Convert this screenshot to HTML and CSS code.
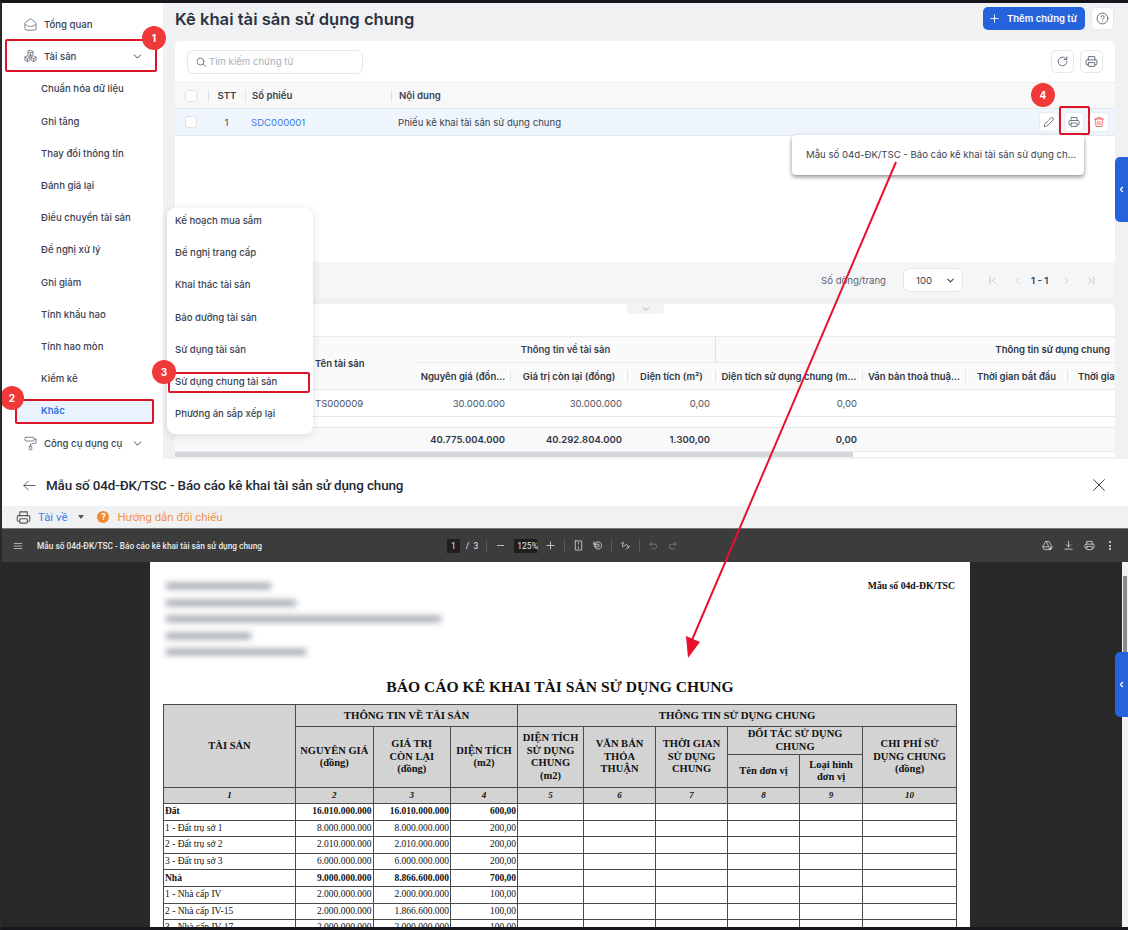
FILE: index.html
```html
<!DOCTYPE html>
<html lang="vi">
<head>
    <meta charset="UTF-8">
    <title>Kê khai tài sản sử dụng chung</title>
    <link rel="stylesheet" href="styles.css">
</head>
<body>
<svg class="sprite" width="0" height="0">
    <defs>
        <symbol id="i-printer" viewBox="0 0 24 24"><path d="M6 9V3h12v6"/><path d="M6 18H4a2 2 0 0 1-2-2v-5a2 2 0 0 1 2-2h16a2 2 0 0 1 2 2v5a2 2 0 0 1-2 2h-2"/><rect x="6" y="14" width="12" height="7" rx="1"/></symbol>
        <symbol id="i-refresh" viewBox="0 0 24 24"><path d="M20 12a8 8 0 1 1-2.6-5.9L20 8.5"/><path d="M20 3.5v5h-5"/></symbol>
        <symbol id="i-search" viewBox="0 0 24 24"><circle cx="11" cy="11" r="7"/><path d="M21 21l-4.8-4.8"/></symbol>
        <symbol id="i-pencil" viewBox="0 0 24 24"><path d="M16.5 3.5a2.9 2.9 0 0 1 4 4L7.5 20.5 2.5 21.5l1-5z"/></symbol>
        <symbol id="i-trash" viewBox="0 0 24 24"><path d="M3 6h18"/><path d="M19 6l-1 15H6L5 6"/><path d="M8 6V4a1 1 0 0 1 1-1h6a1 1 0 0 1 1 1v2"/><path d="M10 11v6"/><path d="M14 11v6"/></symbol>
        <symbol id="i-help" viewBox="0 0 24 24"><circle cx="12" cy="12" r="10"/><path d="M9 9.3a3 3 0 0 1 6 .7c0 2-3 2.5-3 4"/><path d="M12 17.5h.01"/></symbol>
        <symbol id="i-home" viewBox="0 0 24 24"><path d="M3 10.5a2 2 0 0 1 .8-1.6l7-5.4a2 2 0 0 1 2.4 0l7 5.4a2 2 0 0 1 .8 1.6V19a2 2 0 0 1-2 2H5a2 2 0 0 1-2-2z"/><path d="M3.5 11.5c5 5 12 5 17 0"/></symbol>
        <symbol id="i-boxes" viewBox="0 0 24 24"><path d="M12 2l4 2.2v4.600L12 11 8 8.800V4.200z"/><path d="M7 11l4 2.200v4.600L7 20l-4-2.200v-4.600z"/><path d="M17 11l4 2.200v4.600L17 20l-4-2.200v-4.600z"/><path d="M8 4.200l4 2.300 4-2.300M12 6.500V11M3 13.200l4 2.300 4-2.300M7 15.500V20M13 13.200l4 2.300 4-2.300M17 15.500V20"/></symbol>
        <symbol id="i-roller" viewBox="0 0 24 24"><rect x="3" y="2" width="15" height="6" rx="2"/><path d="M18 5h3v6l-9 2v3"/><rect x="10" y="16" width="4" height="6" rx="1"/></symbol>
        <symbol id="i-down" viewBox="0 0 24 24"><path d="M6 9l6 6 6-6"/></symbol>
        <symbol id="i-left" viewBox="0 0 24 24"><path d="M15 6l-6 6 6 6"/></symbol>
        <symbol id="i-right" viewBox="0 0 24 24"><path d="M9 6l6 6-6 6"/></symbol>
        <symbol id="i-first" viewBox="0 0 24 24"><path d="M18 6l-6 6 6 6"/><path d="M7 5v14"/></symbol>
        <symbol id="i-last" viewBox="0 0 24 24"><path d="M6 6l6 6-6 6"/><path d="M17 5v14"/></symbol>
        <symbol id="i-plus" viewBox="0 0 24 24"><path d="M12 4v16M4 12h16"/></symbol>
        <symbol id="i-minus" viewBox="0 0 24 24"><path d="M5 12h14"/></symbol>
        <symbol id="i-back" viewBox="0 0 24 24"><path d="M21 12H3"/><path d="M10 5l-7 7 7 7"/></symbol>
        <symbol id="i-close" viewBox="0 0 24 24"><path d="M4 4l16 16M20 4L4 20"/></symbol>
        <symbol id="i-menu" viewBox="0 0 24 24"><path d="M3 6h18M3 12h18M3 18h18"/></symbol>
        <symbol id="i-fit" viewBox="0 0 24 24"><rect x="5" y="2" width="14" height="20" rx="1"/><path d="M12 6v3M12 15v3"/></symbol>
        <symbol id="i-rotate" viewBox="0 0 24 24"><path d="M5 12a8 8 0 1 0 2.5-5.800L4 9"/><path d="M4 4v5h5"/><rect x="9" y="9" width="6" height="6"/></symbol>
        <symbol id="i-pen" viewBox="0 0 24 24"><path d="M3 8c3-5 6-4 4 0s-3 8 1 6 6-6 8-3-1 6 3 5"/><path d="M14 20l7-7"/></symbol>
        <symbol id="i-undo" viewBox="0 0 24 24"><path d="M8 5L4 9l4 4"/><path d="M4 9h10a5 5 0 0 1 0 10H8"/></symbol>
        <symbol id="i-redo" viewBox="0 0 24 24"><path d="M16 5l4 4-4 4"/><path d="M20 9H10a5 5 0 0 0 0 10h6"/></symbol>
        <symbol id="i-drive" viewBox="0 0 24 24"><path d="M9 3h6l7 12-3 6H5l-3-6z"/><path d="M9 3l6 12H2"/><path d="M18 15v6M15 18h6"/></symbol>
        <symbol id="i-download" viewBox="0 0 24 24"><path d="M12 3v12"/><path d="M7 10l5 5 5-5"/><path d="M4 20h16"/></symbol>
    </defs>
</svg>

<div class="shot">
    <section class="app">
        <nav class="sidebar">
            <a class="nav-item"><svg class="ico ico-nav"><use href="#i-home"/></svg>Tổng quan</a>
            <a class="nav-item"><svg class="ico ico-nav"><use href="#i-boxes"/></svg>Tài sản<svg class="ico ico-caret"><use href="#i-down"/></svg></a>
            <a class="nav-sub">Chuẩn hóa dữ liệu</a>
            <a class="nav-sub">Ghi tăng</a>
            <a class="nav-sub">Thay đổi thông tin</a>
            <a class="nav-sub">Đánh giá lại</a>
            <a class="nav-sub">Điều chuyển tài sản</a>
            <a class="nav-sub">Đề nghị xử lý</a>
            <a class="nav-sub">Ghi giảm</a>
            <a class="nav-sub">Tính khấu hao</a>
            <a class="nav-sub">Tính hao mòn</a>
            <a class="nav-sub">Kiểm kê</a>
            <a class="nav-sub active">Khác</a>
            <a class="nav-item"><svg class="ico ico-nav"><use href="#i-roller"/></svg>Công cụ dụng cụ<svg class="ico ico-caret"><use href="#i-down"/></svg></a>
        </nav>

        <main class="main">
            <header class="page-head">
                <h1>Kê khai tài sản sử dụng chung</h1>
                <button class="btn-primary"><svg class="ico ico-btn"><use href="#i-plus"/></svg>Thêm chứng từ</button>
                <button class="btn-icon btn-help"><svg class="ico"><use href="#i-help"/></svg></button>
            </header>

            <div class="card vouchers">
                <div class="search-row">
                    <div class="search"><svg class="ico ico-search"><use href="#i-search"/></svg>Tìm kiếm chứng từ</div>
                    <button class="btn-icon"><svg class="ico"><use href="#i-refresh"/></svg></button>
                    <button class="btn-icon"><svg class="ico"><use href="#i-printer"/></svg></button>
                </div>
                <div class="v-row v-head">
                    <span class="cell-check"><i class="check"></i></span>
                    <span class="cell-stt">STT</span>
                    <span class="cell-code">Số phiếu</span>
                    <span class="cell-text">Nội dung</span>
                </div>
                <div class="v-row v-body">
                    <span class="cell-check"><i class="check"></i></span>
                    <span class="cell-stt">1</span>
                    <span class="cell-code link">SDC000001</span>
                    <span class="cell-text">Phiếu kê khai tài sản sử dụng chung</span>
                    <span class="row-actions">
                        <button class="btn-mini"><svg class="ico"><use href="#i-pencil"/></svg></button>
                        <button class="btn-mini"><svg class="ico"><use href="#i-printer"/></svg></button>
                        <button class="btn-mini danger"><svg class="ico"><use href="#i-trash"/></svg></button>
                    </span>
                </div>
            </div>

            <div class="pager">
                <span class="pager-label">Số dòng/trang</span>
                <span class="pager-select">100<svg class="ico"><use href="#i-down"/></svg></span>
                <svg class="ico pager-ico"><use href="#i-first"/></svg>
                <svg class="ico pager-ico"><use href="#i-left"/></svg>
                <b>1 - 1</b>
                <svg class="ico pager-ico"><use href="#i-right"/></svg>
                <svg class="ico pager-ico"><use href="#i-last"/></svg>
            </div>

            <div class="card assets">
                <div class="collapse-tab"><svg class="ico"><use href="#i-down"/></svg></div>
                <div class="a-grid a-head">
                    <span class="a-blank"></span>
                    <span class="a-name">Tên tài sản</span>
                    <span class="a-group a-group1">Thông tin về tài sản</span>
                    <span class="a-group a-group2">Thông tin sử dụng chung</span>
                    <span class="a-col">Nguyên giá (đồn...</span>
                    <span class="a-col">Giá trị còn lại (đồng)</span>
                    <span class="a-col">Diện tích (m²)</span>
                    <span class="a-col">Diện tích sử dụng chung (m...</span>
                    <span class="a-col">Văn bản thoả thuậ...</span>
                    <span class="a-col">Thời gian bắt đầu</span>
                    <span class="a-col a-cut">Thời gia</span>
                </div>
                <div class="a-scroll">
                    <div class="a-grid a-row">
                        <span></span><span>TS000009</span><span class="num">30.000.000</span><span class="num">30.000.000</span><span class="num">0,00</span><span class="num">0,00</span><span></span><span></span><span></span>
                    </div>
                    <div class="a-grid a-row">
                        <span></span><span>TS000010</span><span class="num">2.500.000.000</span><span class="num">2.500.000.000</span><span class="num">0,00</span><span class="num">0,00</span><span></span><span></span><span></span>
                    </div>
                </div>
                <div class="a-grid a-foot">
                    <span></span><span></span><span class="num">40.775.004.000</span><span class="num">40.292.804.000</span><span class="num">1.300,00</span><span class="num">0,00</span><span></span><span></span><span></span>
                </div>
                <div class="a-hscroll"><i></i></div>
            </div>
        </main>
    </section>

    <section class="viewer">
        <header class="viewer-head">
            <svg class="ico ico-back"><use href="#i-back"/></svg>
            <h2>Mẫu số 04d-ĐK/TSC - Báo cáo kê khai tài sản sử dụng chung</h2>
            <svg class="ico ico-close"><use href="#i-close"/></svg>
        </header>
        <div class="viewer-tools">
            <svg class="ico ico-print"><use href="#i-printer"/></svg>
            <span class="dl">Tài về</span>
            <i class="tri"></i>
            <span class="q-badge">?</span>
            <span class="guide">Hướng dẫn đối chiếu</span>
        </div>
        <div class="pdf-bar">
            <div class="pdf-left">
                <svg class="ico"><use href="#i-menu"/></svg>
                <span>Mẫu số 04d-ĐK/TSC - Báo cáo kê khai tài sản sử dụng chung</span>
            </div>
            <div class="pdf-center">
                <span class="pdf-box">1</span><span class="pdf-of">/ &nbsp;3</span>
                <i class="pdf-sep"></i>
                <svg class="ico"><use href="#i-minus"/></svg>
                <span class="pdf-box pdf-zoom">125%</span>
                <svg class="ico"><use href="#i-plus"/></svg>
                <i class="pdf-sep"></i>
                <svg class="ico"><use href="#i-fit"/></svg>
                <svg class="ico"><use href="#i-rotate"/></svg>
                <i class="pdf-sep"></i>
                <svg class="ico"><use href="#i-pen"/></svg>
                <i class="pdf-sep"></i>
                <svg class="ico dim"><use href="#i-undo"/></svg>
                <svg class="ico dim"><use href="#i-redo"/></svg>
            </div>
            <div class="pdf-right">
                <svg class="ico"><use href="#i-drive"/></svg>
                <svg class="ico"><use href="#i-download"/></svg>
                <svg class="ico"><use href="#i-printer"/></svg>
                <span class="dots"><i></i><i></i><i></i></span>
            </div>
        </div>
        <div class="pdf-stage">
            <article class="pdf-page">
                <div class="page-top">
                    <div class="blurred">
                        <i class="b1"></i><i class="b2"></i><i class="b3"></i><i class="b4"></i><i class="b5"></i>
                    </div>
                    <div class="form-no">Mẫu số 04d-ĐK/TSC</div>
                </div>
                <div class="report-title">BÁO CÁO KÊ KHAI TÀI SẢN SỬ DỤNG CHUNG</div>
                <table class="report">
                    <colgroup>
                        <col class="c-name"><col class="c-a"><col class="c-a"><col class="c-b"><col class="c-c"><col class="c-d"><col class="c-d"><col class="c-d"><col class="c-e"><col class="c-f">
                    </colgroup>
                    <thead>
                        <tr class="r1">
                            <th rowspan="3" class="th-main">TÀI SẢN</th>
                            <th colspan="3">THÔNG TIN VỀ TÀI SẢN</th>
                            <th colspan="6">THÔNG TIN SỬ DỤNG CHUNG</th>
                        </tr>
                        <tr class="r2">
                            <th rowspan="2">NGUYÊN GIÁ<br>(đồng)</th>
                            <th rowspan="2">GIÁ TRỊ<br>CÒN LẠI<br>(đồng)</th>
                            <th rowspan="2">DIỆN TÍCH<br>(m2)</th>
                            <th rowspan="2">DIỆN TÍCH<br>SỬ DỤNG<br>CHUNG<br>(m2)</th>
                            <th rowspan="2">VĂN BẢN<br>THỎA<br>THUẬN</th>
                            <th rowspan="2">THỜI GIAN<br>SỬ DỤNG<br>CHUNG</th>
                            <th colspan="2">ĐỐI TÁC SỬ DỤNG<br>CHUNG</th>
                            <th rowspan="2">CHI PHÍ SỬ<br>DỤNG CHUNG<br>(đồng)</th>
                        </tr>
                        <tr class="r3">
                            <th>Tên đơn vị</th>
                            <th>Loại hình<br>đơn vị</th>
                        </tr>
                        <tr class="r4">
                            <th>1</th><th>2</th><th>3</th><th>4</th><th>5</th><th>6</th><th>7</th><th>8</th><th>9</th><th>10</th>
                        </tr>
                    </thead>
                    <tbody>
                        <tr class="group"><td>Đất</td><td>16.010.000.000</td><td>16.010.000.000</td><td>600,00</td><td></td><td></td><td></td><td></td><td></td><td></td></tr>
                        <tr><td>1 - Đất trụ sở 1</td><td>8.000.000.000</td><td>8.000.000.000</td><td>200,00</td><td></td><td></td><td></td><td></td><td></td><td></td></tr>
                        <tr><td>2 - Đất trụ sở 2</td><td>2.010.000.000</td><td>2.010.000.000</td><td>200,00</td><td></td><td></td><td></td><td></td><td></td><td></td></tr>
                        <tr><td>3 - Đất trụ sở 3</td><td>6.000.000.000</td><td>6.000.000.000</td><td>200,00</td><td></td><td></td><td></td><td></td><td></td><td></td></tr>
                        <tr class="group"><td>Nhà</td><td>9.000.000.000</td><td>8.866.600.000</td><td>700,00</td><td></td><td></td><td></td><td></td><td></td><td></td></tr>
                        <tr><td>1 - Nhà cấp IV</td><td>2.000.000.000</td><td>2.000.000.000</td><td>100,00</td><td></td><td></td><td></td><td></td><td></td><td></td></tr>
                        <tr><td>2 - Nhà cấp IV-15</td><td>2.000.000.000</td><td>1.866.600.000</td><td>100,00</td><td></td><td></td><td></td><td></td><td></td><td></td></tr>
                        <tr><td>3 - Nhà cấp IV-17</td><td>2.000.000.000</td><td>2.000.000.000</td><td>100,00</td><td></td><td></td><td></td><td></td><td></td><td></td></tr>
                    </tbody>
                </table>
            </article>
            <div class="pdf-scroll"><i></i></div>
        </div>
    </section>

    <!-- menu va chu thich nam de len tren noi dung -->
    <div class="side-tab tab-top"><svg class="ico"><use href="#i-left"/></svg></div>
    <div class="side-tab tab-bottom"><svg class="ico"><use href="#i-left"/></svg></div>

    <ul class="flyout">
        <li>Kế hoạch mua sắm</li>
        <li>Đề nghị trang cấp</li>
        <li>Khai thác tài sản</li>
        <li>Bảo dưỡng tài sản</li>
        <li>Sử dụng tài sản</li>
        <li>Sử dụng chung tài sản</li>
        <li>Phương án sắp xếp lại</li>
    </ul>

    <div class="print-pop">Mẫu số 04d-ĐK/TSC - Báo cáo kê khai tài sản sử dụng ch...</div>

    <svg class="arrow" viewBox="0 0 1128 930">
        <path d="M896 162L692 640"/>
        <polygon points="688,658 686,636 700,642"/>
    </svg>

    <i class="mark mark-1"></i>
    <i class="mark mark-2"></i>
    <i class="mark mark-3"></i>
    <i class="mark mark-4"></i>
    <b class="step step-1">1</b>
    <b class="step step-2">2</b>
    <b class="step step-3">3</b>
    <b class="step step-4">4</b>
</div>
</body>
</html>
```

FILE: styles.css
```css
* {
    box-sizing: border-box;
}
html, body {
    margin: 0;
    padding: 0;
}
body {
    width: 1128px;
    height: 930px;
    overflow: hidden;
    font-family: Inter, "Noto Sans", sans-serif;
    font-size: 9.6px;
    color: #3a4252;
    background: #fff;
}
.sprite {
    position: absolute;
}
.ico {
    width: 14px;
    height: 14px;
    fill: none;
    stroke: currentColor;
    stroke-width: 2;
    stroke-linecap: round;
    stroke-linejoin: round;
    flex: none;
}
button {
    font: inherit;
    padding: 0;
    cursor: pointer;
}

.shot {
    position: relative;
    width: 1128px;
    height: 930px;
    overflow: hidden;
    border-top: 3px solid #15171d;
    border-bottom: 3px solid #15171d;
    border-left: 2px solid #2a2a2a;
    display: flex;
    flex-direction: column;
}

/* phan tren */
.app {
    display: flex;
    height: 456px;
    flex: none;
    background: #f0f1f3;
}
.sidebar {
    width: 161px;
    flex: none;
    background: #fff;
    padding-top: 5.5px;
}
.nav-item, .nav-sub {
    display: flex;
    align-items: center;
    height: 32.2px;
    font-weight: 500;
    white-space: nowrap;
}
.nav-item {
    padding-left: 21px;
}
.ico-nav {
    width: 15px;
    height: 15px;
    stroke-width: 1.4;
    margin-right: 6px;
    color: #6b7280;
}
.ico-caret {
    width: 13px;
    height: 13px;
    margin-left: auto;
    margin-right: 19px;
    stroke-width: 1.8;
}
.nav-sub {
    padding-left: 39px;
}
.nav-sub.active {
    color: #2f6fe0;
    font-weight: 600;
    background: #e9f2fd;
    margin: 4px 9px 4px 14px;
    height: 24.2px;
    padding-left: 25px;
}

.main {
    width: 965px;
    padding-left: 12px;
    padding-right: 13px;
    flex: none;
}
.page-head {
    display: flex;
    align-items: center;
    height: 38px;
    padding-bottom: 7px;
}
.page-head h1 {
    margin: 0 auto 0 0;
    font-size: 16.6px;
    font-weight: 600;
    color: #2b3240;
}
.btn-primary {
    display: flex;
    align-items: center;
    width: 102px;
    height: 23px;
    padding-left: 6px;
    gap: 7px;
    border: 0;
    border-radius: 5px;
    background: #2563dc;
    color: #fff;
    font-size: 9.5px;
    font-weight: 600;
}
.ico-btn {
    width: 11px;
    height: 11px;
}
.btn-icon {
    width: 23px;
    height: 23px;
    display: flex;
    align-items: center;
    justify-content: center;
    border: 1px solid #e6e8ec;
    border-radius: 5px;
    background: #fff;
    color: #5b6270;
}
.btn-icon .ico {
    width: 13px;
    height: 13px;
    stroke-width: 1.7;
}
.btn-help {
    margin-left: 6px;
    margin-right: 1px;
}

.card {
    background: #fff;
}
.vouchers {
    height: 221px;
    border-radius: 5px 5px 0 0;
}
.search-row {
    display: flex;
    align-items: center;
    gap: 6px;
    height: 41px;
    padding: 0 12px;
}
.search {
    display: flex;
    align-items: center;
    width: 176px;
    height: 24px;
    margin-right: auto;
    padding-left: 7px;
    gap: 2px;
    border: 1px solid #e5e7eb;
    border-radius: 6px;
    color: #a9afba;
}
.ico-search {
    width: 12px;
    height: 12px;
    color: #6b7280;
    stroke-width: 1.8;
}
.v-row {
    display: flex;
    align-items: center;
}
.v-head {
    height: 27px;
    background: #f8f8f9;
    border-top: 1px solid #ececef;
    border-bottom: 1px solid #e6e8ec;
    font-weight: 600;
}
.v-body {
    height: 27px;
    background: #eff5fc;
    border-bottom: 1px solid #e4e7ec;
}
.cell-check {
    width: 33px;
    padding-left: 10px;
    display: flex;
    align-items: center;
}
.check {
    display: block;
    width: 12px;
    height: 12px;
    border: 1px solid #dfe2e7;
    border-radius: 3px;
    background: #fff;
}
.cell-stt {
    width: 37px;
    text-align: center;
}
.cell-code {
    width: 146px;
    padding-left: 6px;
}
.cell-text {
    padding-left: 7px;
}
.v-head .cell-stt, .v-head .cell-code, .v-head .cell-text {
    border-left: 1px solid #e0e2e6;
    line-height: 12px;
}
.link {
    color: #3b7de6;
}
.row-actions {
    display: flex;
    gap: 5px;
    margin-left: auto;
    padding-right: 6px;
}
.btn-mini {
    width: 20px;
    height: 20px;
    display: flex;
    align-items: center;
    justify-content: center;
    background: #fff;
    border: 1px solid #e8ebf0;
    border-radius: 4px;
    color: #5f6673;
}
.btn-mini .ico {
    width: 12px;
    height: 12px;
    stroke-width: 1.7;
}
.btn-mini.danger {
    color: #ef5a5a;
}

.pager {
    display: flex;
    align-items: center;
    justify-content: flex-end;
    height: 36px;
    padding-right: 18px;
    background: #f4f6f8;
    border-radius: 0 0 5px 5px;
    color: #5b6270;
}
.pager-label {
    margin-right: 17px;
}
.pager-select {
    display: flex;
    align-items: center;
    justify-content: space-between;
    width: 60px;
    height: 24px;
    padding: 0 6px 0 12px;
    margin-right: 24px;
    background: #fff;
    border: 1px solid #e5e7eb;
    border-radius: 6px;
    color: #3a4252;
}
.pager-select .ico {
    width: 11px;
    height: 11px;
    stroke-width: 2.4;
}
.pager-ico {
    width: 11px;
    height: 11px;
    color: #b8bdc6;
    margin-right: 14px;
    stroke-width: 1.8;
}
.pager b {
    width: 22px;
    margin: 0 8px 0 -6px;
    color: #3a4252;
    font-weight: 600;
    white-space: nowrap;
}
.pager-ico:last-child {
    margin-right: 0;
}

.assets {
    position: relative;
    height: 153px;
    margin-top: 6px;
    padding-top: 32px;
    overflow: hidden;
    border-radius: 5px 5px 0 0;
    font-size: 9.5px;
}
.collapse-tab {
    position: absolute;
    left: 452px;
    top: 0;
    width: 37px;
    height: 10px;
    background: #f2f3f5;
    border-radius: 0 0 4px 4px;
    display: flex;
    justify-content: center;
    align-items: flex-start;
    color: #7b818c;
}
.collapse-tab .ico {
    width: 10px;
    height: 10px;
    stroke-width: 1.4;
}
.a-grid {
    display: grid;
    grid-template-columns: 140px 101px 95px 117px 88px 147px 103px 102px 47px;
}
.a-head {
    grid-template-rows: 26px 26px;
    background: #fafafb;
    border-top: 1px solid #e8e9ec;
    border-bottom: 1px solid #e8e9ec;
    font-weight: 600;
    white-space: nowrap;
    overflow: hidden;
}
.a-blank {
    grid-row: 1 / 3;
}
.a-name {
    grid-row: 1 / 3;
    align-self: center;
    color: #2f3644;
}
.a-group {
    display: flex;
    align-items: center;
    border-bottom: 1px solid #e8e9ec;
}
.a-group1 {
    grid-column: 3 / 6;
    justify-content: center;
    border-right: 1px solid #e0e2e6;
}
.a-group2 {
    grid-column: 6 / 10;
    justify-content: flex-end;
    padding-right: 5px;
    color: #2f3644;
}
.a-col {
    display: flex;
    align-items: center;
    justify-content: center;
    overflow: hidden;
    border-right: 1px solid #e3e5e9;
    margin: 7px 0;
    color: #2f3644;
}
.a-cut {
    justify-content: flex-start;
    padding-left: 10px;
    border-right: 0;
}
.a-scroll {
    height: 37px;
    overflow: hidden;
}
.a-row {
    height: 27px;
    align-items: center;
    border-bottom: 1px solid #e8e9ec;
    color: #4a5160;
}
.num {
    text-align: right;
    padding-right: 6px;
}
.a-foot {
    height: 25px;
    align-items: center;
    background: #f9f9fa;
    border-top: 1px solid #e2e4e8;
    border-bottom: 1px solid #e8e9ec;
    color: #2f3644;
    font-weight: 600;
}
.a-hscroll {
    height: 5px;
    background: #fff;
}
.a-hscroll i {
    display: block;
    width: 678px;
    height: 5px;
    background: #d3d6da;
}

/* phan xem bao cao */
.viewer {
    flex: 1;
    display: flex;
    flex-direction: column;
    min-height: 0;
    padding-top: 1px;
}
.viewer-head {
    display: flex;
    align-items: center;
    height: 46px;
    padding: 4px 20px 0;
    flex: none;
}
.ico-back {
    width: 15px;
    height: 15px;
    color: #5b6270;
    stroke-width: 1.6;
    margin-right: 9px;
}
.viewer-head h2 {
    margin: 0 auto 0 0;
    font-family: Roboto, sans-serif;
    font-size: 13.4px;
    letter-spacing: -0.1px;
    font-weight: 500;
    color: #23272f;
}
.ico-close {
    width: 16px;
    height: 16px;
    stroke-width: 1.5;
    color: #444;
    margin-right: 1px;
}
.viewer-tools {
    display: flex;
    align-items: center;
    height: 23px;
    flex: none;
    padding-left: 14px;
    background: #f0f1f3;
    border-bottom: 1px solid #777;
    font-family: Roboto, sans-serif;
    font-size: 11.4px;
}
.ico-print {
    width: 15px;
    height: 15px;
    color: #555;
    stroke-width: 1.7;
    margin-right: 7px;
}
.dl {
    color: #3f7fe4;
}
.tri {
    width: 0;
    height: 0;
    margin: 0 13px 0 11px;
    border: 3.5px solid transparent;
    border-top: 4px solid #555;
    border-bottom: 0;
}
.q-badge {
    width: 12px;
    height: 12px;
    border-radius: 50%;
    background: #f28a30;
    color: #fff;
    font-size: 9px;
    font-weight: 700;
    line-height: 12px;
    text-align: center;
    margin-right: 8px;
}
.guide {
    color: #f2924a;
}

.pdf-bar {
    display: flex;
    align-items: center;
    height: 33px;
    flex: none;
    background: #3c3c3c;
    color: #e8eaed;
    font-family: Roboto, sans-serif;
}
.pdf-left {
    display: flex;
    align-items: center;
    width: 445px;
    padding-left: 11px;
    gap: 14px;
    font-size: 8.3px;
    font-weight: 500;
    white-space: nowrap;
}
.pdf-left .ico, .pdf-center .ico, .pdf-right .ico {
    width: 11px;
    height: 11px;
    stroke-width: 1.6;
}
.pdf-left .ico {
    width: 10px;
    height: 10px;
}
.pdf-center {
    display: flex;
    align-items: center;
    gap: 8px;
    font-size: 8.5px;
}
.pdf-box {
    background: #1f1f1f;
    padding: 2px 4px;
    line-height: 10px;
}
.pdf-of {
    margin-left: -2px;
}
.pdf-sep {
    width: 1px;
    height: 12px;
    background: #5a5a5a;
}
.pdf-zoom {
    padding: 2px 3px;
    width: 23px;
}
.dim {
    color: #85888c;
}
.pdf-right {
    display: flex;
    align-items: center;
    gap: 10px;
    margin-left: auto;
    padding-right: 17px;
}
.dots {
    display: flex;
    flex-direction: column;
    gap: 1.5px;
    margin-left: 4px;
}
.dots i {
    width: 2px;
    height: 2px;
    border-radius: 50%;
    background: #e8eaed;
}

.pdf-stage {
    position: relative;
    flex: 1;
    min-height: 0;
    background: #282828;
    overflow: hidden;
    padding-left: 148px;
    padding-right: 6px;
}
.pdf-page {
    width: 820px;
    height: 500px;
    background: #fff;
    padding: 1px 0 0 13px;
    font-family: "Liberation Serif", serif;
    color: #111;
}
.page-top {
    display: flex;
    justify-content: space-between;
    height: 102px;
}
.blurred {
    width: 400px;
    padding: 20px 0 0 3px;
    filter: blur(3px);
}
.blurred i {
    display: block;
    height: 6px;
    margin-bottom: 10.5px;
    background: #9ba1a8;
}
.b1 { width: 105px; }
.b2 { width: 130px; }
.b3 { width: 275px; }
.b4 { width: 85px; }
.b5 { width: 140px; }
.form-no {
    margin: 17px 15px 0 0;
    font-size: 9.7px;
    font-weight: 700;
}
.report-title {
    width: 794px;
    height: 39px;
    padding-top: 5px;
    text-align: center;
    font-size: 15.6px;
    font-weight: 700;
    line-height: 34px;
}
.report {
    width: 794px;
    table-layout: fixed;
    border-collapse: collapse;
    font-size: 9.5px;
    line-height: 12.5px;
}
.c-name { width: 132px; }
.c-a { width: 77.5px; }
.c-b { width: 67px; }
.c-c { width: 66px; }
.c-d { width: 72px; }
.c-e { width: 63px; }
.c-f { width: 94px; }
.report th, .report td {
    border: 1.5px solid #4a4a4a;
    padding: 0;
}
.report th {
    background: #d3d3d3;
    text-align: center;
    vertical-align: middle;
    font-size: 10.5px;
}
.r1 { height: 22px; }
.r2 { height: 28px; }
.r3 { height: 33px; }
.r4 { height: 16px; }
.report .r1 th {
    font-size: 10.8px;
}
.report .r1 .th-main {
    font-size: 10.5px;
}
.report .r4 th {
    font-style: italic;
    font-size: 9px;
}
.report td {
    height: 16.6px;
    text-align: right;
    line-height: 13px;
    padding-right: 1px;
    white-space: nowrap;
}
.report td:first-child {
    text-align: left;
    padding-left: 1px;
}
.group td {
    font-weight: 700;
}
.pdf-scroll {
    position: absolute;
    right: 0;
    top: 0;
    bottom: 0;
    width: 6px;
    background: #f1f1f1;
}
.pdf-scroll i {
    display: block;
    margin: 14px 1px 0;
    height: 76px;
    background: #8a8a8a;
}

/* lop phu */
.side-tab {
    position: absolute;
    left: 1113px;
    width: 13px;
    height: 65px;
    background: #2563dc;
    border-radius: 5px 0 0 5px;
    color: #fff;
    display: flex;
    align-items: center;
    justify-content: center;
}
.side-tab .ico {
    width: 9px;
    height: 9px;
    stroke-width: 3;
}
.tab-top { top: 154px; }
.tab-bottom { top: 649px; }

.flyout {
    position: absolute;
    left: 165px;
    top: 205px;
    width: 146px;
    height: 226px;
    margin: 0;
    padding: 0 8px;
    list-style: none;
    background: #fff;
    border-radius: 8px;
    box-shadow: 0 2px 8px rgba(30, 40, 60, 0.14);
    font-weight: 500;
}
.flyout li {
    height: 32.2px;
    line-height: 26px;
    white-space: nowrap;
}
.print-pop {
    position: absolute;
    left: 790px;
    top: 132px;
    width: 292px;
    height: 40px;
    padding-left: 14px;
    line-height: 40px;
    background: #fff;
    border-radius: 4px;
    box-shadow: 0 2px 4px rgba(0, 0, 0, 0.45);
    white-space: nowrap;
}
.arrow {
    position: absolute;
    left: -2px;
    top: -3px;
    width: 1128px;
    height: 930px;
    pointer-events: none;
}
.arrow path {
    fill: none;
    stroke: #e8102a;
    stroke-width: 2;
}
.arrow polygon {
    fill: #e8102a;
}
.mark {
    position: absolute;
    border: 2px solid #dc1428;
    border-radius: 2px;
}
.mark-1 { left: 3px; top: 36px; width: 152px; height: 33px; }
.mark-2 { left: 13px; top: 396px; width: 139px; height: 25px; }
.mark-3 { left: 166px; top: 369px; width: 142px; height: 21px; }
.mark-4 { left: 1057px; top: 103px; width: 31px; height: 29px; }
.step {
    position: absolute;
    width: 24px;
    height: 24px;
    border-radius: 50%;
    background: #f03a3a;
    color: #fff;
    font-size: 10px;
    font-weight: 700;
    line-height: 24px;
    text-align: center;
}
.step-1 { left: 140px; top: 23px; }
.step-2 { left: -2px; top: 383px; }
.step-3 { left: 150px; top: 357px; }
.step-4 { left: 1029px; top: 80px; }
```
